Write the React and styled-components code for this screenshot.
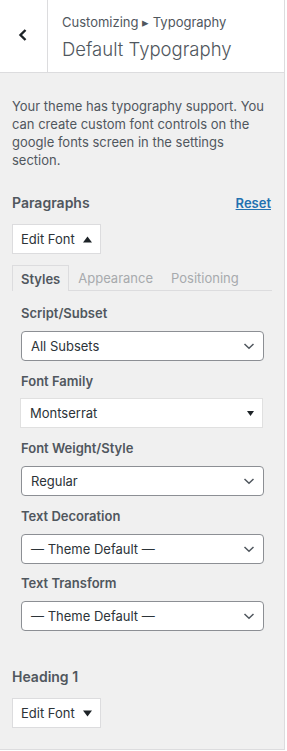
import React from "react";
import styled, { createGlobalStyle } from "styled-components";

const Global = createGlobalStyle`
  html, body { margin: 0; padding: 0; background: #fff; }
  body { font-family: Inter, "Noto Sans", sans-serif; color: #50575e; -webkit-font-smoothing: antialiased; }
  * { box-sizing: border-box; }
`;

const Panel = styled.div`
  width: 285px;
  height: 750px;
  background: #f0f0f0;
  border-right: 1px solid #dcdcde;
  border-bottom: 1px solid #dcdcde;
  display: flex;
  flex-direction: column;
  overflow: hidden;
`;

const Header = styled.div`
  display: flex;
  height: 73px;
  background: #fff;
  border-bottom: 1px solid #dcdcde;
  flex-shrink: 0;
`;

const BackButton = styled.button`
  width: 48px;
  border: 0;
  border-right: 1px solid #dcdcde;
  background: #fff;
  display: flex;
  align-items: center;
  justify-content: center;
  padding: 0 2px 2px 0;
  color: #1d2327;
`;

const Titles = styled.div`
  display: flex;
  flex-direction: column;
  padding: 14px 0 0 14px;
`;

const Crumb = styled.span`
  font-size: 13px;
  line-height: 16px;
  color: #50575e;
`;

const Title = styled.h3`
  margin: 6px 0 0;
  font-size: 18.5px;
  line-height: 26px;
  font-weight: 300;
  color: #50575e;
`;

const Body = styled.div`
  padding: 24px 12px 0 12px;
  display: flex;
  flex-direction: column;
`;

const Desc = styled.p`
  margin: 0;
  font-size: 13px;
  line-height: 18px;
  color: #50575e;
`;

const SectionHead = styled.div`
  display: flex;
  justify-content: space-between;
  align-items: center;
  margin-top: ${(p) => p.$top}px;
`;

const SectionTitle = styled.span`
  font-size: 14px;
  font-weight: 600;
  color: #50575e;
  line-height: 20px;
`;

const ResetLink = styled.a`
  font-size: 13px;
  font-weight: 600;
  color: #2271b1;
  text-decoration: underline;
  margin-right: 1px;
`;

const EditFont = styled.button`
  margin-top: 11px;
  align-self: flex-start;
  width: 89px;
  height: 30px;
  background: #fff;
  border: 1px solid #dcdcde;
  display: flex;
  align-items: center;
  justify-content: space-between;
  padding: 0 8px 0 8px;
  font-family: inherit;
  font-size: 13px;
  color: #2c3338;
`;

const Fields = styled.div`
  padding: 0 8px 0 9px;
  display: flex;
  flex-direction: column;
`;

const Tabs = styled.div`
  margin-top: 11px;
  display: flex;
  align-items: flex-start;
  border-bottom: 1px solid #dcdcde;
  height: 26px;
`;

const Tab = styled.div`
  padding: 0 8px;
  height: ${(p) => (p.$active ? 26 : 25)}px;
  display: flex;
  align-items: center;
  font-size: 13px;
  font-weight: ${(p) => (p.$active ? 600 : 400)};
  color: ${(p) => (p.$active ? "#50575e" : "#a7aaad")};
  border: 1px solid ${(p) => (p.$active ? "#dcdcde" : "transparent")};
  border-bottom: 0;
  background: #f0f0f0;
`;

const Label = styled.div`
  margin-top: ${(p) => p.$top}px;
  font-size: 13px;
  font-weight: 600;
  line-height: 18px;
  color: #50575e;
`;

const Select = styled.div`
  margin-top: 9px;
  height: 30px;
  background: #fff;
  border: 1px solid #8c8f94;
  border-radius: 4px;
  display: flex;
  align-items: center;
  justify-content: space-between;
  padding: 0 7px 0 9px;
  font-size: 13px;
  color: #2c3338;
`;

const FlatSelect = styled(Select)`
  margin-top: 8px;
  margin-left: -1px;
  margin-right: 1px;
  border: 1px solid #e0e0e0;
  border-radius: 0;
  padding: 0 8px 0 9px;
`;

const Chevron = () => (
  <svg width="14" height="14" viewBox="0 0 14 14" fill="none">
    <path d="M2.5 5 L7 9.2 L11.5 5" stroke="#50575e" strokeWidth="1.5" />
  </svg>
);

const Caret = () => (
  <svg width="7" height="7" viewBox="0 0 7 7">
    <path d="M0 1 H7 L3.5 6 Z" fill="#1d2327" />
  </svg>
);

const Tri = ({ up }) => (
  <svg width="9" height="7" viewBox="0 0 9 7">
    <path d={up ? "M0 6.5 H9 L4.5 0.5 Z" : "M0 0.5 H9 L4.5 6.5 Z"} fill="#1d2327" />
  </svg>
);

export default function App() {
  return (
    <>
      <Global />
      <Panel>
        <Header>
          <BackButton aria-label="Back">
            <svg width="12" height="14" viewBox="0 0 12 14">
              <path d="M8.5 2 L3.5 7 L8.5 12" stroke="#1d2327" strokeWidth="2.4" fill="none" />
            </svg>
          </BackButton>
          <Titles>
            <Crumb>Customizing ▸ Typography</Crumb>
            <Title>Default Typography</Title>
          </Titles>
        </Header>
        <Body>
          <Desc>
            Your theme has typography support. You can create custom font controls on the google fonts
            screen in the settings section.
          </Desc>
          <SectionHead $top={24}>
            <SectionTitle>Paragraphs</SectionTitle>
            <ResetLink href="#">Reset</ResetLink>
          </SectionHead>
          <EditFont>
            Edit Font <Tri up />
          </EditFont>
          <Tabs>
            <Tab $active>Styles</Tab>
            <Tab>Appearance</Tab>
            <Tab>Positioning</Tab>
          </Tabs>
          <Fields>
            <Label $top={13}>Script/Subset</Label>
            <Select>
              All Subsets <Chevron />
            </Select>
            <Label $top={11}>Font Family</Label>
            <FlatSelect>
              Montserrat <Caret />
            </FlatSelect>
            <Label $top={11}>Font Weight/Style</Label>
            <Select>
              Regular <Chevron />
            </Select>
            <Label $top={11}>Text Decoration</Label>
            <Select>
              — Theme Default — <Chevron />
            </Select>
            <Label $top={10}>Text Transform</Label>
            <Select>
              — Theme Default — <Chevron />
            </Select>
          </Fields>
          <SectionHead $top={36}>
            <SectionTitle>Heading 1</SectionTitle>
          </SectionHead>
          <EditFont>
            Edit Font <Tri />
          </EditFont>
        </Body>
      </Panel>
    </>
  );
}
